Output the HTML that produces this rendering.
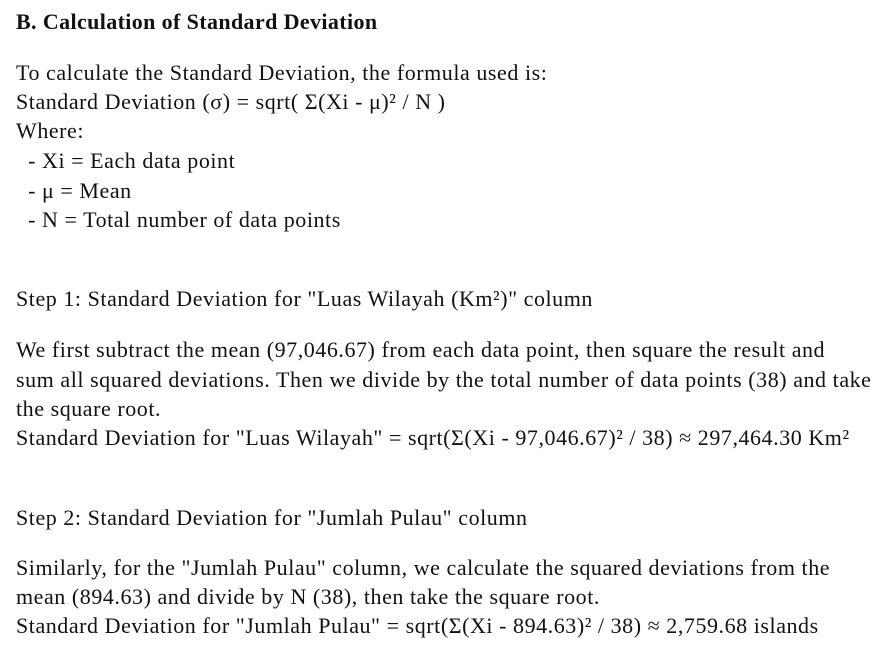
<!DOCTYPE html>
<html><head><meta charset="utf-8"><style>
html,body{margin:0;padding:0;background:#fff;}
body{width:890px;height:671px;position:relative;overflow:hidden;font-family:"Liberation Serif","DejaVu Serif",serif;color:#111;}
.l{position:absolute;left:16px;font-size:22px;letter-spacing:0.55px;white-space:nowrap;line-height:24px;}
.h{font-weight:bold;font-size:22px;letter-spacing:0.38px;}
</style></head><body>
<div class="l h" style="top:10px">B. Calculation of Standard Deviation</div>
<div class="l" style="top:61px">To calculate the Standard Deviation, the formula used is:</div>
<div class="l" style="top:90px">Standard Deviation (σ) = sqrt( Σ(Xi - μ)² / N )</div>
<div class="l" style="top:119px">Where:</div>
<div class="l" style="top:149px">&nbsp; - Xi = Each data point</div>
<div class="l" style="top:179px">&nbsp; - μ = Mean</div>
<div class="l" style="top:208px">&nbsp; - N = Total number of data points</div>
<div class="l" style="top:287px">Step 1: Standard Deviation for "Luas Wilayah (Km²)" column</div>
<div class="l" style="top:338px">We first subtract the mean (97,046.67) from each data point, then square the result and</div>
<div class="l" style="top:368px">sum all squared deviations. Then we divide by the total number of data points (38) and take</div>
<div class="l" style="top:397px">the square root.</div>
<div class="l" style="top:426px">Standard Deviation for "Luas Wilayah" = sqrt(Σ(Xi - 97,046.67)² / 38) ≈ 297,464.30 Km²</div>
<div class="l" style="top:506px">Step 2: Standard Deviation for "Jumlah Pulau" column</div>
<div class="l" style="top:556px">Similarly, for the "Jumlah Pulau" column, we calculate the squared deviations from the</div>
<div class="l" style="top:585px">mean (894.63) and divide by N (38), then take the square root.</div>
<div class="l" style="top:614px">Standard Deviation for "Jumlah Pulau" = sqrt(Σ(Xi - 894.63)² / 38) ≈ 2,759.68 islands</div>
</body></html>
